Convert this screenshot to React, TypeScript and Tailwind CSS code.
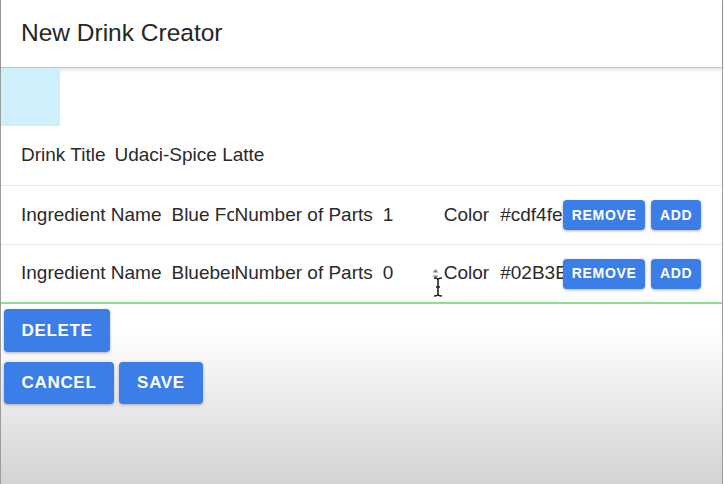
import React from "react";

const btn =
  "flex items-center justify-center rounded-[4px] bg-[#3b7ee8] font-bold text-white uppercase shadow-[0_1px_3px_rgba(0,0,0,0.3)]";

const Spinner = () => (
  <svg width="9" height="14" viewBox="0 0 9 14" className="shrink-0">
    <path d="M1.5 5.5 L4.5 2 L7.5 5.5 Z" fill="#8a8a8a" />
    <path d="M1.5 8.5 L4.5 12 L7.5 8.5 Z" fill="#8a8a8a" />
  </svg>
);

const IBeam = () => (
  <svg
    width="10"
    height="20"
    viewBox="0 0 10 20"
    className="absolute left-[432px] top-[277px]"
  >
    <path
      d="M1 1 Q5 1 5 3 Q5 1 9 1 M5 3 V17 M1 19 Q5 19 5 17 Q5 19 9 19 M3 10 H7"
      stroke="#222"
      strokeWidth="1.6"
      fill="none"
    />
  </svg>
);

type Row = {
  name: string;
  parts: string;
  color: string;
  spinner?: boolean;
  last?: boolean;
};

const IngredientRow = ({ name, parts, color, spinner, last }: Row) => (
  <div
    className={
      "flex h-[59px] shrink-0 items-center pl-[20px] " +
      (last ? "border-b-2 border-[#8fdf91]" : "border-b border-[#e6e6e6]")
    }
  >
    <span className="whitespace-nowrap">Ingredient Name</span>
    <input
      readOnly
      value={name}
      className="ml-[10px] w-[63px] bg-transparent p-0 outline-none"
    />
    <span className="whitespace-nowrap">Number of Parts</span>
    <div className="ml-[10px] flex w-[60px] items-center">
      <input
        readOnly
        value={parts}
        className="w-[48px] bg-transparent p-0 outline-none"
      />
      {spinner && <Spinner />}
    </div>
    <span className="ml-[1px] whitespace-nowrap">Color</span>
    <input
      readOnly
      value={color}
      className="ml-[11px] w-[63px] bg-transparent p-0 outline-none"
    />
    <button className={btn + " h-[30px] w-[82px] text-[14px] tracking-[0.05em]"}>
      Remove
    </button>
    <button
      className={btn + " ml-[6px] h-[30px] w-[50px] text-[14px] tracking-[0.05em]"}
    >
      Add
    </button>
  </div>
);

export default function App() {
  return (
    <div className="h-[484px] w-[724px] overflow-hidden bg-white font-['Liberation_Sans',Arial,sans-serif] text-[19px] text-[#2a2a2a]">
      <div className="relative flex h-full w-[723px] flex-col border-x border-[#9c9c9c] bg-gradient-to-b from-white from-[68%] to-[#d3d3d3]">
        <header className="flex h-[68px] shrink-0 items-center border-b border-[#c4c4c4] bg-white pl-[20px] text-[24.5px] text-[#262626] shadow-[0_2px_4px_rgba(0,0,0,0.12)]">
          New Drink Creator
        </header>

        <div className="h-[58px] w-[59px] shrink-0 bg-[#cdf0fb]" />

        <div className="flex h-[60px] shrink-0 items-center border-b border-[#e6e6e6] pl-[20px]">
          <span>Drink Title</span>
          <input
            readOnly
            value="Udaci-Spice Latte"
            className="ml-[9px] w-[200px] bg-transparent p-0 outline-none"
          />
        </div>

        <IngredientRow name="Blue Food Coloring" parts="1" color="#cdf4fe" />
        <IngredientRow
          name="Blueberry"
          parts="0"
          color="#02B3E4"
          spinner
          last
        />

        <div className="ml-[3px] mt-[5px]">
          <button
            className={btn + " h-[43px] w-[106px] text-[17px] tracking-[0.04em]"}
          >
            Delete
          </button>
          <div className="mt-[10px] flex gap-[5px]">
            <button
              className={btn + " h-[42px] w-[110px] text-[17px] tracking-[0.04em]"}
            >
              Cancel
            </button>
            <button
              className={btn + " h-[42px] w-[84px] text-[17px] tracking-[0.04em]"}
            >
              Save
            </button>
          </div>
        </div>

        <IBeam />
      </div>
    </div>
  );
}
